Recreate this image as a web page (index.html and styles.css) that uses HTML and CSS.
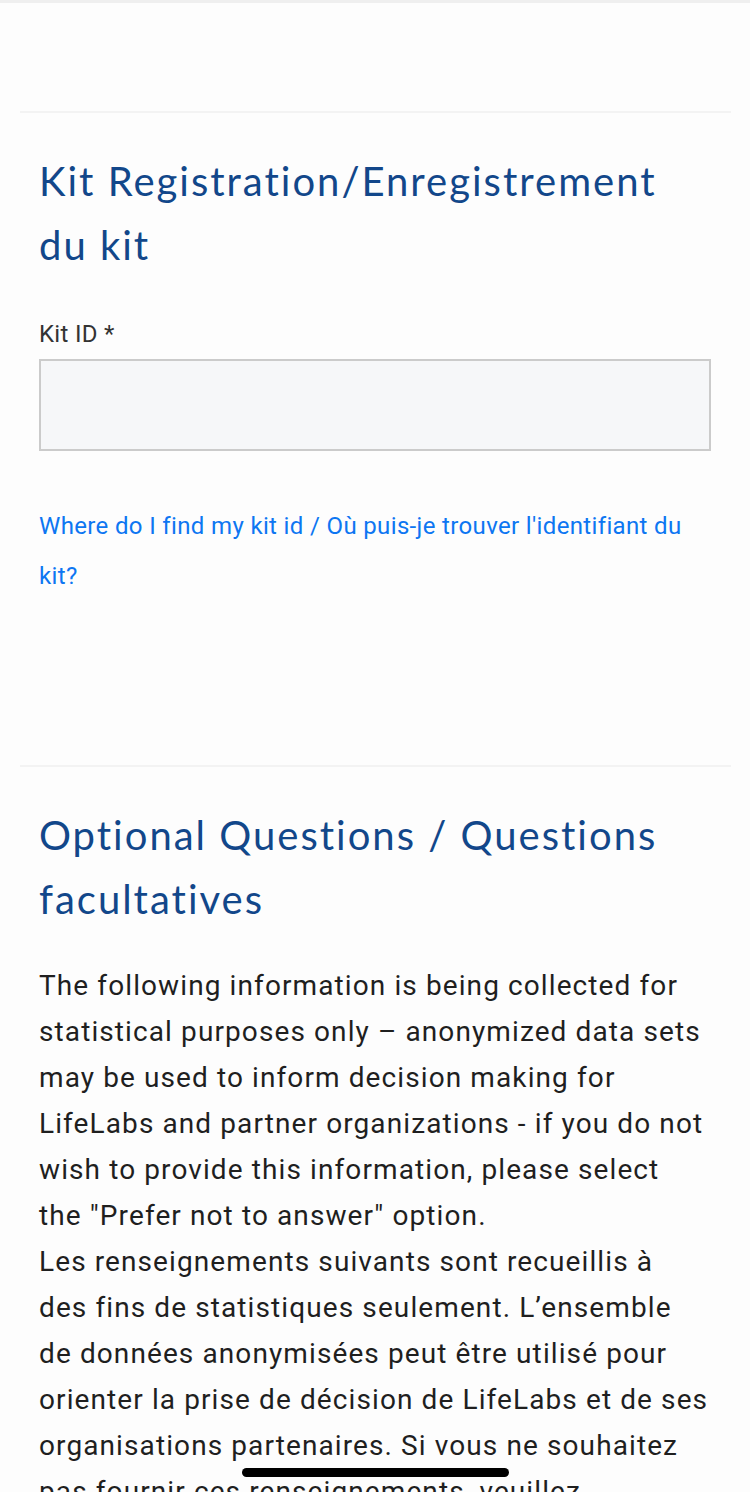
FILE: index.html
```html
<!DOCTYPE html>
<html lang="en">
<head>
  <meta charset="UTF-8" />
  <meta name="viewport" content="width=device-width, initial-scale=1.0" />
  <title>Kit Registration</title>
  <link rel="stylesheet" href="styles.css">
</head>
<body>
  <div class="topbar"></div>
  <div class="page">
    <div class="section">
      <h2>Kit Registration/Enregistrement du kit</h2>
      <label class="label" for="kitId">Kit ID *</label>
      <input id="kitId" class="field" type="text" />
      <a class="help" href="#">Where do I find my kit id / Où puis-je trouver l'identifiant du kit?</a>
    </div>

    <div class="section">
      <h2>Optional Questions / Questions facultatives</h2>
      <p class="intro">
        The following information is being collected for statistical purposes only – anonymized data sets may be used to inform decision making for LifeLabs and partner organizations - if you do not wish to provide this information, please select<br>the "Prefer not to answer" option.<br>
        Les renseignements suivants sont recueillis à<br>des fins de statistiques seulement. L’ensemble de données anonymisées peut être utilisé pour orienter la prise de décision de LifeLabs et de ses organisations partenaires. Si vous ne souhaitez pas fournir ces renseignements, veuillez sélectionner l’option « Je préfère ne pas répondre ».
      </p>
    </div>
  </div>
  <div class="home-bar"></div>
</body>
</html>
```

FILE: styles.css
```css
body {
  margin: 0;
  background: #fdfdfd;
  font-family: Roboto, "Liberation Sans", sans-serif;
  color: #1f1f1f;
}
.topbar {
  height: 3px;
  background: #efefef;
}
.page {
  padding: 108px 19px 0 20px;
}
.section {
  border-top: 2px solid #f3f3f3;
  padding: 0 20px 0 19px;
}
.section + .section {
  margin-top: 164px;
}
.section h2 {
  max-width: 670px;
  margin: 36px 0 0;
  font-family: Lato, "Noto Sans", sans-serif;
  font-weight: 400;
  font-size: 40px;
  line-height: 64px;
  letter-spacing: 2px;
  color: #12478a;
}
.label {
  display: block;
  margin-top: 42px;
  font-size: 24px;
  line-height: 30px;
  letter-spacing: 0.3px;
  color: #333;
}
.field {
  display: block;
  box-sizing: border-box;
  width: 100%;
  height: 92px;
  margin-top: 10px;
  border: 2px solid #cbcbcb;
  background: #f6f7f9;
  font-size: 24px;
}
.help {
  display: block;
  margin-top: 50px;
  font-size: 24px;
  line-height: 50px;
  letter-spacing: 0.35px;
  color: #0d76f2;
  text-decoration: none;
}
.intro {
  margin: 32px 0 0;
  font-size: 28px;
  line-height: 46px;
  letter-spacing: 1.1px;
}
.home-bar {
  position: fixed;
  left: 242px;
  bottom: 15px;
  width: 267px;
  height: 9px;
  border-radius: 5px;
  background: #000;
}
```
